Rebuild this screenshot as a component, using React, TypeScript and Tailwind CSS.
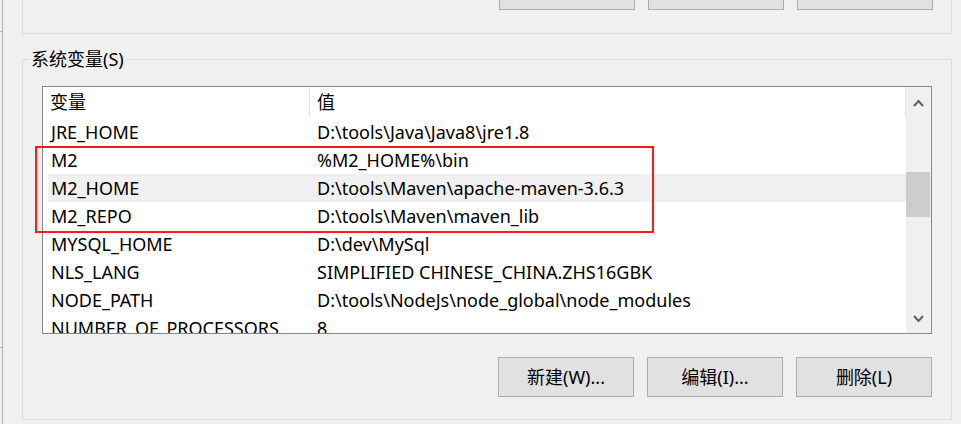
import React from 'react'

const rows = [
  { name: 'JRE_HOME', value: 'D:\\tools\\Java\\Java8\\jre1.8' },
  { name: 'M2', value: '%M2_HOME%\\bin' },
  { name: 'M2_HOME', value: 'D:\\tools\\Maven\\apache-maven-3.6.3', hover: true },
  { name: 'M2_REPO', value: 'D:\\tools\\Maven\\maven_lib' },
  { name: 'MYSQL_HOME', value: 'D:\\dev\\MySql' },
  { name: 'NLS_LANG', value: 'SIMPLIFIED CHINESE_CHINA.ZHS16GBK' },
  { name: 'NODE_PATH', value: 'D:\\tools\\NodeJs\\node_global\\node_modules' },
  { name: 'NUMBER_OF_PROCESSORS', value: '8' },
]

function Chevron({ down }: { down?: boolean }) {
  return (
    <svg width="11" height="8" viewBox="0 0 11 8" className={down ? 'rotate-180' : ''}>
      <polyline points="1,7 5.5,2 10,7" fill="none" stroke="#606060" strokeWidth="2" />
    </svg>
  )
}

function WinButton({ label }: { label: string }) {
  return (
    <button className="flex h-[40px] w-[136px] items-center justify-center border border-[#adadad] bg-[#e1e1e1] text-[18px] text-black">
      {label}
    </button>
  )
}

export default function App() {
  return (
    <div className="relative flex h-[424px] w-[961px] overflow-hidden bg-[#f0f0f0] font-['Noto_Sans','Noto_Sans_CJK_SC',sans-serif] text-black">
      {/* edge of the window behind */}
      <div className="flex w-[3px] shrink-0 flex-col border-r border-[#b4b4b4]">
        <div className="mt-[31px] h-px bg-[#b4b4b4]" />
        <div className="mt-[315px] h-px bg-[#b4b4b4]" />
      </div>

      <div className="ml-[19px] flex w-[930px] flex-col">
        {/* user variables panel, scrolled off the top */}
        <div className="flex h-[34px] justify-end border-x border-b border-[#dcdcdc] pr-[18px]">
          <div className="flex h-[10px] gap-[13px]">
            {[0, 1, 2].map((i) => (
              <div key={i} className="w-[136px] border-x border-b border-[#adadad] bg-[#e1e1e1]" />
            ))}
          </div>
        </div>

        <fieldset className="mt-[13px] border border-[#dcdcdc]">
          <legend className="ml-[7px] px-[1px] text-[18px] leading-[24px]">系统变量(S)</legend>

          <div className="px-[19px] pb-[22px]">
            <div className="mt-[15px] flex h-[248px] border border-[#828790] bg-white">
              <div className="flex flex-1 flex-col overflow-hidden">
                <div className="flex h-[31px] shrink-0 text-[18px]">
                  <div className="my-[1px] flex w-[267px] items-center border-r border-[#e5e5e5] pl-[7px]">变量</div>
                  <div className="my-[1px] flex flex-1 items-center border-r border-[#e5e5e5] pl-[7px]">值</div>
                </div>
                <div className="flex flex-col pl-[5px]">
                  {rows.map((r) => (
                    <div
                      key={r.name}
                      className={`flex h-[28px] shrink-0 items-center whitespace-nowrap text-[18px] ${r.hover ? 'bg-[#f0f0f0]' : ''}`}
                    >
                      <div className="w-[261px] pl-[3px]">{r.name}</div>
                      <div className="pl-[8px]">{r.value}</div>
                    </div>
                  ))}
                </div>
              </div>

              <div className="flex w-[25px] shrink-0 flex-col bg-[#f0f0f0]">
                <div className="flex h-[32px] items-center justify-center">
                  <Chevron />
                </div>
                <div className="flex-1">
                  <div className="mr-[1px] mt-[53px] h-[45px] bg-[#cdcdcd]" />
                </div>
                <div className="flex h-[28px] items-center justify-center">
                  <Chevron down />
                </div>
              </div>
            </div>

            <div className="mt-[23px] flex justify-end gap-[13px]">
              <WinButton label="新建(W)..." />
              <WinButton label="编辑(I)..." />
              <WinButton label="删除(L)" />
            </div>
          </div>
        </fieldset>
      </div>

      {/* annotation box */}
      <div className="absolute left-[35px] top-[146px] h-[87px] w-[619px] border-2 border-[#ff1a1a]" />
    </div>
  )
}
